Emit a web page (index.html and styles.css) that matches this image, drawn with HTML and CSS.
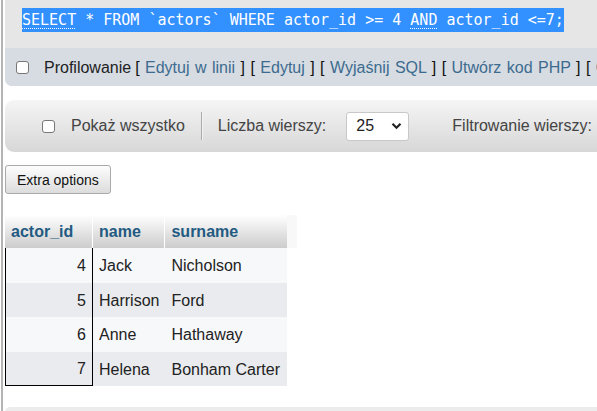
FILE: index.html
```html
<!DOCTYPE html>
<html lang="pl">
<head>
<meta charset="utf-8">
<title>phpMyAdmin</title>
<link rel="stylesheet" href="styles.css">
</head>
<body>
<div class="page">
  <div class="sqlbox">
    <div class="sqlcode"><span class="sel"><span class="kw">SELECT</span> * FROM `actors` WHERE actor_id &gt;= 4 <span class="kw">AND</span> actor_id &lt;=7;</span></div>
    <div class="tools">
      <input type="checkbox" class="chk">
      <span class="label">Profilowanie</span>
      <span class="links">[ <a href="#">Edytuj w linii</a> ] [ <a href="#">Edytuj</a> ] [ <a href="#">Wyjaśnij SQL</a> ] [ <a href="#">Utwórz kod PHP</a> ] [ <a href="#">Odśwież</a> ]</span>
    </div>
  </div>

  <div class="navbar">
    <input type="checkbox" class="chk">
    <span class="navtext">Pokaż wszystko</span>
    <span class="sep"></span>
    <span class="navtext">Liczba wierszy:</span>
    <span class="select"><span>25</span><svg width="11" height="8" viewBox="0 0 11 8"><path d="M1.5 1.8 L5.5 5.8 L9.5 1.8" fill="none" stroke="#222" stroke-width="2.2"/></svg></span>
    <span class="navtext filter">Filtrowanie wierszy:</span>
  </div>

  <button class="extra">Extra options</button>

  <table class="results">
    <thead>
      <tr>
        <th class="c1">actor_id</th>
        <th class="c2">name</th>
        <th class="c3">surname</th>
        <th class="c4"></th>
      </tr>
    </thead>
    <tbody>
      <tr class="odd"><td class="num">4</td><td>Jack</td><td>Nicholson</td></tr>
      <tr class="even"><td class="num">5</td><td>Harrison</td><td>Ford</td></tr>
      <tr class="odd"><td class="num">6</td><td>Anne</td><td>Hathaway</td></tr>
      <tr class="even last"><td class="num">7</td><td>Helena</td><td>Bonham Carter</td></tr>
    </tbody>
  </table>

  <div class="bottombox"></div>
</div>
</body>
</html>
```

FILE: styles.css
```css
html, body {
  margin: 0;
  padding: 0;
  background: #fff;
  overflow: hidden;
}

body {
  font-family: "Liberation Sans", Arial, sans-serif;
  font-size: 16px;
  color: #222;
}

.page {
  margin-left: 1px;
  border-left: 2px solid #b4b4b4;
  padding-left: 2px;
  min-height: 411px;
  box-sizing: border-box;
}

.sqlbox {
  width: calc(100% + 30px);
  background: #e6e6e6;
  border-radius: 0 0 7px 7px;
  overflow: hidden;
}

.sqlcode {
  padding: 8px 0 16px 17px;
  height: 24px;
}

.sel {
  display: inline-block;
  height: 24px;
  line-height: 24px;
  background: #3390ff;
  color: #fff;
  font-family: "DejaVu Sans Mono", "Liberation Mono", monospace;
  font-size: 15px;
  white-space: pre;
}

.kw {
  text-decoration: underline dotted;
  text-underline-offset: 3px;
  text-decoration-thickness: 1px;
}

.tools {
  background: #d6dce2;
  height: 38px;
  display: flex;
  align-items: center;
  padding-left: 11px;
  padding-top: 1px;
  box-sizing: border-box;
  white-space: nowrap;
}

.chk {
  appearance: none;
  -webkit-appearance: none;
  width: 13px;
  height: 13px;
  margin: 0;
  border: 1px solid #777;
  border-radius: 3px;
  background: #fff;
  box-sizing: border-box;
  flex: none;
}

.tools .label {
  margin-left: 15px;
  color: #222;
}

.links {
  margin-left: 4px;
  color: #111;
  word-spacing: 1px;
}

.links a {
  color: #3d6b8f;
  text-decoration: none;
}

.navbar {
  margin-top: 14px;
  width: calc(100% + 30px);
  height: 52px;
  background: linear-gradient(#f5f5f5, #d7d7d7);
  border-radius: 9px;
  display: flex;
  align-items: center;
  padding-left: 37px;
  box-sizing: border-box;
  white-space: nowrap;
  color: #444;
}

.navbar .chk {
  margin-right: 16px;
}

.sep {
  width: 1px;
  height: 28px;
  background: #aaa;
  box-shadow: 1px 0 0 #f2f2f2;
  margin: 0 16px;
}

.select {
  margin-left: 20px;
  width: 63px;
  height: 29px;
  box-sizing: border-box;
  background: #fff;
  border: 1px solid #c8c8c8;
  border-radius: 3px;
  display: flex;
  align-items: center;
  justify-content: space-between;
  padding: 0 6px 0 9px;
  color: #222;
}

.filter {
  margin-left: 43px;
}

.extra {
  display: block;
  margin: 13px 0 0 0;
  height: 29px;
  padding: 0 11px;
  font-family: "Liberation Sans", Arial, sans-serif;
  font-size: 14px;
  color: #111;
  background: linear-gradient(#fdfdfd, #dcdcdc);
  border: 1px solid #aaa;
  border-radius: 3px;
}

.results {
  margin-top: 21px;
  border-collapse: separate;
  border-spacing: 0;
}

.results th {
  height: 33px;
  box-sizing: border-box;
  padding: 0 6px;
  text-align: left;
  font-weight: bold;
  color: #235a81;
  background: linear-gradient(#ffffff, #cccccc);
  border-right: 1px solid #fff;
}

.results th.c1 { width: 88px; }
.results th.c2 { width: 72px; }
.results th.c3 { width: 122px; border-right: none; }
.results th.c4 {
  width: 11px;
  padding: 0;
  background: #f8f8f8;
}

.results td {
  height: 34.5px;
  box-sizing: border-box;
  padding: 2px 6px 0;
  color: #222;
}

.results td.num {
  text-align: right;
  border-left: 1px solid #000;
  border-right: 1px solid #000;
}

.results tr.last td.num {
  border-bottom: 1px solid #000;
}

.results tr.odd td { background: #f7f8fa; }
.results tr.even td { background: #e9ebee; }

.bottombox {
  margin-top: 21px;
  width: calc(100% + 30px);
  height: 20px;
  background: #ececec;
  border-radius: 5px 5px 0 0;
}
```
